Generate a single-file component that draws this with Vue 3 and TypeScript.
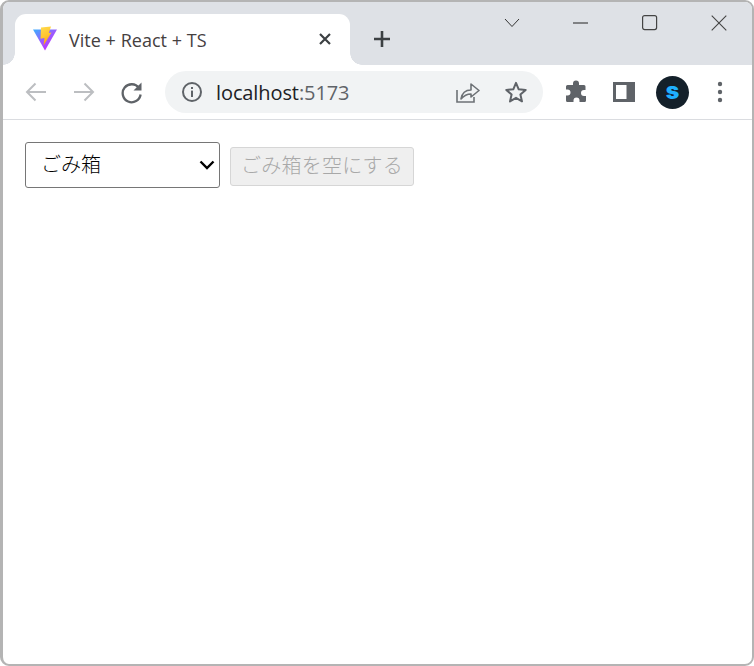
<script setup lang="ts">
const title: string = 'Vite + React + TS'
</script>

<template>
  <div class="window">
    <div class="tabstrip">
      <div class="tab">
        <svg class="favicon" width="26" height="25" viewBox="0 0 26 25">
          <defs>
            <linearGradient id="vg" x1="0" y1="0.1" x2="0.65" y2="0.9">
              <stop offset="0" stop-color="#41a8ff" />
              <stop offset="0.55" stop-color="#9a5cff" />
              <stop offset="1" stop-color="#bd34fe" />
            </linearGradient>
            <linearGradient id="yg" x1="0.3" y1="0" x2="0.6" y2="1">
              <stop offset="0" stop-color="#ffd84a" />
              <stop offset="0.5" stop-color="#ffc52e" />
              <stop offset="1" stop-color="#ff9d00" />
            </linearGradient>
          </defs>
          <path d="M1 3.6 L25 3.6 L13 24.500 Z" fill="url(#vg)" />
          <path d="M9 1.400 L19 0.600 L16.800 7 L19.500 6.500 L11.500 19.500 L12.500 12 L8.500 12.800 Z" fill="url(#yg)" />
        </svg>
        <span class="tab-title">{{ title }}</span>
        <svg class="tab-close" width="14" height="14" viewBox="0 0 14 14">
          <path d="M2 2 L12 12 M12 2 L2 12" stroke="#3c4043" stroke-width="2.2" fill="none" />
        </svg>
      </div>
      <svg class="new-tab" width="20" height="20" viewBox="0 0 20 20">
        <path d="M10 2 V18 M2 10 H18" stroke="#3c4043" stroke-width="2.6" fill="none" />
      </svg>
      <div class="win-controls">
        <svg class="ctl ctl-chevron" width="16" height="10" viewBox="0 0 16 10">
          <path d="M1 1 L8 8.5 L15 1" stroke="#333" stroke-width="1" fill="none" />
        </svg>
        <svg class="ctl ctl-min" width="16" height="2" viewBox="0 0 16 2">
          <path d="M0 1 H15" stroke="#222" stroke-width="1" fill="none" />
        </svg>
        <svg class="ctl ctl-max" width="16" height="16" viewBox="0 0 16 16">
          <rect x="0.600" y="0.600" width="14" height="14" rx="2" stroke="#444" stroke-width="1.2" fill="none" />
        </svg>
        <svg class="ctl ctl-x" width="16" height="16" viewBox="0 0 16 16">
          <path d="M0.7 0.7 L15.3 15.3 M15.3 0.7 L0.7 15.3" stroke="#444" stroke-width="1.1" fill="none" />
        </svg>
      </div>
    </div>

    <div class="toolbar">
      <svg class="tb back" width="24" height="24" viewBox="0 0 24 24">
        <path d="M22 12 H3.5 M11.5 3.5 L3 12 L11.5 20.5" stroke="#bcbec1" stroke-width="2" fill="none" />
      </svg>
      <svg class="tb forward" width="24" height="24" viewBox="0 0 24 24">
        <path d="M2 12 H20.5 M12.5 3.5 L21 12 L12.5 20.5" stroke="#bcbec1" stroke-width="2" fill="none" />
      </svg>
      <svg class="tb reload" width="24" height="24" viewBox="0 0 24 24">
        <path d="M19 8 A9 9 0 1 0 20.6 14.5" stroke="#5f6368" stroke-width="2.3" fill="none" />
        <path d="M21.5 2.5 V10.5 H13.5 Z" fill="#5f6368" />
      </svg>
      <div class="omnibox">
        <svg class="info" width="22" height="22" viewBox="0 0 22 22">
          <circle cx="11" cy="11" r="9" stroke="#5f6368" stroke-width="2" fill="none" />
          <rect x="10" y="9.6" width="2" height="6.4" fill="#5f6368" />
          <rect x="10" y="6" width="2" height="2" fill="#5f6368" />
        </svg>
        <span class="url"><span class="host">localhost</span><span class="port">:5173</span></span>
        <svg class="share" width="24" height="22" viewBox="0 0 24 22">
          <path d="M1 9 V21 H18 V16" stroke="#6d7175" stroke-width="1.6" fill="none" />
          <path d="M5 18 C6 12 10 9 15 9 V3 L23 9.500 L15 16 V13 C11 13 8 14.5 5 18 Z" stroke="#6d7175" stroke-width="1.6" fill="none" stroke-linejoin="round" />
        </svg>
        <svg class="star" width="24" height="24" viewBox="0 0 24 24">
          <path d="M12 2.8 L14.7 9.3 L21.7 9.9 L16.4 14.5 L18 21.4 L12 17.8 L6 21.4 L7.6 14.5 L2.3 9.9 L9.3 9.3 Z" stroke="#5f6368" stroke-width="2" fill="none" stroke-linejoin="round" />
        </svg>
      </div>
      <svg class="tb puzzle" width="24" height="24" viewBox="0 0 24 24">
        <path d="M9 3.5 A3 3 0 0 1 15 3.5 V5 H20 A1.5 1.5 0 0 1 21.5 6.5 V10 H20 A3 3 0 0 0 20 16 H22 V20.5 A1.5 1.5 0 0 1 20.500 22 H15.500 V20.500 A3 3 0 0 0 9.500 20.500 V22 H3.500 A1.500 1.500 0 0 1 2 20.500 V15.500 H3.500 A3 3 0 0 0 3.500 9.500 H2 V6.500 A1.500 1.500 0 0 1 3.500 5 H9 Z" fill="#5f6368" />
      </svg>
      <svg class="tb panel" width="22" height="20" viewBox="0 0 22 20">
        <rect x="0" y="0" width="22" height="20" fill="#5f6368" />
        <rect x="3" y="3" width="10.500" height="14" fill="#fff" />
      </svg>
      <div class="avatar">s</div>
      <svg class="tb dots" width="6" height="22" viewBox="0 0 6 22">
        <circle cx="3" cy="3" r="2.200" fill="#5f6368" />
        <circle cx="3" cy="11" r="2.200" fill="#5f6368" />
        <circle cx="3" cy="19" r="2.200" fill="#5f6368" />
      </svg>
    </div>

    <div class="content">
      <div class="picker-wrap">
        <select class="picker">
          <option>ごみ箱</option>
        </select>
        <svg class="picker-arrow" width="16" height="10" viewBox="0 0 16 10">
          <path d="M1.500 1.500 L8 8 L14.500 1.500" stroke="#000" stroke-width="2.400" fill="none" />
        </svg>
      </div>
      <button class="empty" disabled>ごみ箱を空にする</button>
    </div>
  </div>
</template>

<style>
html, body { margin: 0; background: #fff; }
</style>

<style scoped>
.window {
  box-sizing: border-box;
  width: 754px;
  height: 666px;
  border: 2px solid #b4b4b4;
  border-left-width: 3px;
  border-radius: 9px;
  background: #fff;
  overflow: hidden;
  display: flex;
  flex-direction: column;
  font-family: "Open Sans", "Noto Sans", sans-serif;
}
.tabstrip {
  height: 63px;
  flex: none;
  background: #dee1e6;
  display: flex;
  align-items: flex-end;
  padding-left: 12px;
  position: relative;
}
.tab {
  position: relative;
  box-sizing: border-box;
  width: 335px;
  height: 51px;
  background: #fff;
  border-radius: 11px 11px 0 0;
  display: flex;
  align-items: center;
  padding: 0 18px 0 17px;
}
.tab::before,
.tab::after {
  content: "";
  position: absolute;
  bottom: 0;
  width: 12px;
  height: 12px;
  background: radial-gradient(circle at 0 0, #dee1e6 11.5px, #fff 12px);
}
.tab::before { left: -12px; }
.tab::after {
  right: -12px;
  background: radial-gradient(circle at 100% 0, #dee1e6 11.5px, #fff 12px);
}
.favicon { flex: none; margin-top: -2px; }
.tab-title {
  margin-left: 11px;
  flex: 1;
  font-size: 18px;
  letter-spacing: 0.03px;
  color: #45403f;
  margin-top: 1px;
  white-space: nowrap;
}
.tab-close { flex: none; margin-top: -2px; }
.new-tab { margin: 0 0 16px 22px; flex: none; }
.win-controls {
  margin-left: auto;
  display: flex;
  align-items: center;
  height: 16px;
  margin-bottom: 34px;
  padding-right: 25px;
}
.ctl { flex: none; display: block; }
.ctl-chevron { margin-left: 0; }
.ctl-min { margin-left: 53px; }
.ctl-max { margin-left: 53px; }
.ctl-x { margin-left: 53px; }

.toolbar {
  box-sizing: border-box;
  height: 55px;
  flex: none;
  border-bottom: 1px solid #dadce0;
  display: flex;
  align-items: center;
  padding-left: 21px;
}
.tb { flex: none; display: block; }
.forward { margin-left: 24px; }
.reload { margin-left: 24px; }
.omnibox {
  box-sizing: border-box;
  margin-left: 21px;
  width: 378px;
  height: 42px;
  border-radius: 21px;
  background: #f1f3f4;
  display: flex;
  align-items: center;
  padding-left: 16px;
  flex: none;
}
.info { flex: none; }
.url { margin-left: 13px; font-size: 20px; flex: 1; white-space: nowrap; letter-spacing: -0.1px; }
.host { color: #202124; }
.port { color: #5f6368; }
.share { flex: none; margin-right: 24px; }
.star { flex: none; margin-right: 15px; }
.puzzle { margin-left: 21px; }
.panel { margin-left: 25px; }
.avatar {
  margin-left: 21px;
  width: 33px;
  height: 33px;
  border-radius: 50%;
  background: #14202a;
  color: #1fb0ff;
  font-family: Inter, "Open Sans", sans-serif;
  font-weight: 900;
  font-size: 23px;
  line-height: 31px;
  text-align: center;
  flex: none;
}
.dots { margin-left: 28px; }

.content {
  flex: none;
  display: flex;
  align-items: flex-start;
  align-self: flex-start;
  padding: 22px 0 0 22px;
  gap: 10px;
}
.picker-wrap {
  position: relative;
  width: 195px;
  height: 46px;
  flex: none;
}
.picker {
  box-sizing: border-box;
  display: block;
  width: 195px;
  height: 46px;
  padding: 0 0 4px 15px;
  appearance: none;
  font-size: 20px;
  font-weight: 300;
  font-family: "Noto Sans CJK JP", sans-serif;
  color: #000;
  background: #fff;
  border: 1px solid #767676;
  border-radius: 3px;
}
.picker-arrow {
  position: absolute;
  right: 5px;
  top: 18px;
  pointer-events: none;
}
.empty {
  box-sizing: border-box;
  width: 184px;
  height: 39px;
  margin-top: 5px;
  padding: 0 0 5px;
  font-size: 20px;
  font-weight: 300;
  letter-spacing: 0.25px;
  font-family: "Noto Sans CJK JP", sans-serif;
  color: #a8a8a8;
  background: #efefef;
  border: 1px solid #d6d6d6;
  border-radius: 3px;
}
</style>
